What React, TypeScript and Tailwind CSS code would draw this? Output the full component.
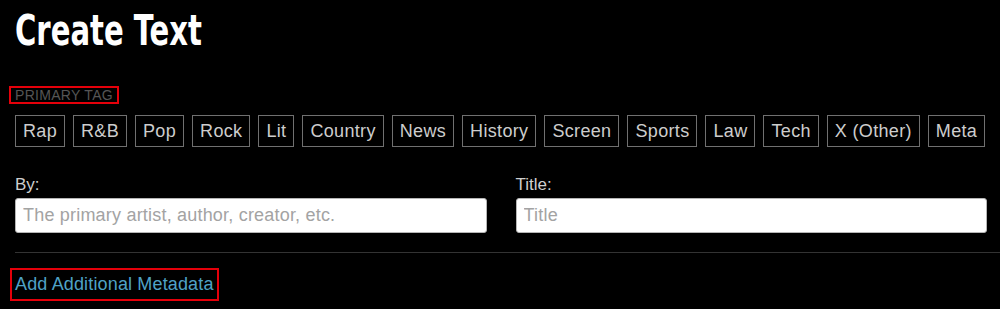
const tags = ['Rap', 'R&B', 'Pop', 'Rock', 'Lit', 'Country', 'News', 'History', 'Screen', 'Sports', 'Law', 'Tech', 'X (Other)', 'Meta'];

export default function App() {
  return (
    <div className="w-full h-[309px] overflow-hidden bg-black pl-[15px] pr-[13px] pt-[7px] font-['Liberation_Sans',Arial,sans-serif]">
      {/* condensed display face isn't installed, so squeeze the bold one */}
      <h1 className="origin-left scale-x-[0.77] text-[42px] leading-[48px] font-bold text-white font-['DejaVu_Sans_Condensed','DejaVu_Sans',sans-serif]">
        Create Text
      </h1>

      <div className="mt-[31px] flex">
        <span className="-ml-[6px] border-2 border-[#e5000a] px-[4px] text-[14px] leading-[14px] tracking-[0.3px] text-[#555]">
          PRIMARY TAG
        </span>
      </div>

      <div className="mt-[11px] flex gap-[8px]">
        {tags.map((tag) => (
          <button
            key={tag}
            className="border border-[#707070] px-[7px] py-[5px] text-[18px] leading-[20px] tracking-[0.33px] text-[#cdcdcd]"
          >
            {tag}
          </button>
        ))}
      </div>

      <div className="mt-[28px] grid grid-cols-2 gap-[29px]">
        <div className="flex flex-col">
          <label className="text-[17px] leading-[20px] text-[#cfcfcf]">By:</label>
          <input
            className="mt-[3px] h-[35px] w-full rounded-[3px] border border-[#b5b5b5] bg-white px-[7px] text-[18px] tracking-[0.2px] text-black placeholder:text-[#a3a3a3] outline-none"
            placeholder="The primary artist, author, creator, etc."
          />
        </div>
        <div className="flex flex-col">
          <label className="text-[17px] leading-[20px] text-[#cfcfcf]">Title:</label>
          <input
            className="mt-[3px] h-[35px] w-full rounded-[3px] border border-[#b5b5b5] bg-white px-[7px] text-[18px] tracking-[0.2px] text-black placeholder:text-[#a3a3a3] outline-none"
            placeholder="Title"
          />
        </div>
      </div>

      <div className="-mr-[13px] mt-[19px] h-px bg-[#333]" />

      <div className="mt-[15px] flex">
        <a className="-ml-[5px] border-2 border-[#e5000a] px-[3px] text-[18px] leading-[29px] tracking-[0.15px] text-[#4fa2c6]">
          Add Additional Metadata
        </a>
      </div>
    </div>
  );
}
